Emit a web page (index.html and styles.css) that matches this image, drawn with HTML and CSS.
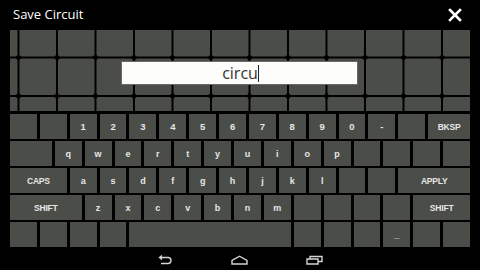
FILE: index.html
```html
<!DOCTYPE html>
<html>
<head>
<meta charset="utf-8">
<link rel="stylesheet" href="styles.css">
</head>
<body>
<div class="screen">
  <header class="topbar">
    <span class="title">Save Circuit</span>
    <svg class="close" width="14" height="14" viewBox="0 0 14 14"><path d="M2 2 L12 12 M12 2 L2 12" stroke="#fff" stroke-width="2.6" stroke-linecap="square"/></svg>
  </header>
  <main class="panel">
    <div class="canvas">
      <div class="field"><span class="val">circu</span><span class="cursor"></span></div>
    </div>
    <div class="keyboard">
      <div class="key"></div><div class="key"></div><div class="key num">1</div><div class="key num">2</div><div class="key num">3</div><div class="key num">4</div><div class="key num">5</div><div class="key num">6</div><div class="key num">7</div><div class="key num">8</div><div class="key num">9</div><div class="key num">0</div><div class="key num">-</div><div class="key"></div><div class="key k3 cap">BKSP</div>

      <div class="key k3"></div><div class="key">q</div><div class="key">w</div><div class="key">e</div><div class="key">r</div><div class="key">t</div><div class="key">y</div><div class="key">u</div><div class="key">i</div><div class="key">o</div><div class="key">p</div><div class="key"></div><div class="key"></div><div class="key"></div><div class="key"></div>

      <div class="key k4 cap">CAPS</div><div class="key">a</div><div class="key">s</div><div class="key">d</div><div class="key">f</div><div class="key">g</div><div class="key">h</div><div class="key">j</div><div class="key">k</div><div class="key">l</div><div class="key"></div><div class="key"></div><div class="key k5 cap">APPLY</div>

      <div class="key k5 cap">SHIFT</div><div class="key">z</div><div class="key">x</div><div class="key">c</div><div class="key">v</div><div class="key">b</div><div class="key">n</div><div class="key">m</div><div class="key"></div><div class="key"></div><div class="key"></div><div class="key"></div><div class="key k4 cap">SHIFT</div>

      <div class="key"></div><div class="key"></div><div class="key"></div><div class="key"></div><div class="key k11"></div><div class="key"></div><div class="key"></div><div class="key"></div><div class="key num">_</div><div class="key"></div><div class="key"></div>
    </div>
  </main>
  <nav class="navbar">
    <svg width="16" height="10" viewBox="0 0 16 10"><path d="M2.5 2.5 H11 A3 3 0 0 1 11 8.5 H4 M5 0.5 L2.5 2.5 L5 4.5" fill="none" stroke="#d4d4d4" stroke-width="1.4"/></svg>
    <svg width="17" height="10" viewBox="0 0 17 10"><path d="M1 9 V5.5 L8.5 1.2 L16 5.5 V9 Z" fill="none" stroke="#d4d4d4" stroke-width="1.4"/></svg>
    <svg width="17" height="10" viewBox="0 0 17 10"><path d="M1 4 H12 V9 H1 Z M4 4 V1.5 H16 V6.5 H12" fill="none" stroke="#d4d4d4" stroke-width="1.4"/></svg>
  </nav>
</div>
</body>
</html>
```

FILE: styles.css
```css
html, body {
  margin: 0;
  padding: 0;
  background: #000;
}
.screen {
  width: 480px;
  height: 270px;
  overflow: hidden;
  background: #000;
  display: flex;
  flex-direction: column;
  font-family: "Open Sans", "Liberation Sans", sans-serif;
}
.topbar {
  height: 30px;
  flex: none;
  display: flex;
  align-items: center;
  justify-content: space-between;
  padding: 0 18px 2px 13px;
  box-sizing: border-box;
}
.title {
  color: #fff;
  font-size: 13px;
  line-height: 17px;
}
.close {
  display: block;
  margin-top: 1px;
}
.panel {
  flex: none;
  padding: 0 10px;
  display: flex;
  flex-direction: column;
  gap: 3px;
}
.canvas {
  position: relative;
  height: 81px;
  background-color: #4b4d48;
  background-image:
    radial-gradient(circle, #000 2.2px, transparent 2.8px),
    linear-gradient(to right, #000 2px, transparent 2px),
    linear-gradient(to bottom, #000 2px, transparent 2px);
  background-size: 38.5px 38.5px;
  background-position: -10.75px 8.25px, 7.5px 0, 0 26.5px;
}
.field {
  position: absolute;
  left: 111px;
  top: 31px;
  width: 237px;
  height: 24px;
  box-sizing: border-box;
  border: 1px solid #6a6a66;
  background: #fdfdfb;
  display: flex;
  align-items: center;
  justify-content: center;
}
.val {
  font-family: "Open Sans", sans-serif;
  font-size: 16px;
  color: #333;
  line-height: 20px;
  margin-left: 2px;
}
.cursor {
  width: 1px;
  height: 17px;
  background: #222;
}
.keyboard {
  display: grid;
  grid-template-columns: repeat(31, 1fr);
  grid-auto-rows: 25px;
  column-gap: 3px;
  row-gap: 2px;
}
.key {
  grid-column: span 2;
  background: #4b4d48;
  color: #e6e6e6;
  font-family: "Liberation Sans", sans-serif;
  font-size: 9px;
  font-weight: bold;
  display: flex;
  align-items: center;
  justify-content: center;
}
.k3 { grid-column: span 3; }
.k4 { grid-column: span 4; }
.k5 { grid-column: span 5; }
.k11 { grid-column: span 11; }
.cap {
  font-size: 8.5px;
  letter-spacing: -0.2px;
}
.num {
  font-size: 9.5px;
}
.navbar {
  flex: none;
  height: 20px;
  margin-top: 3px;
  display: flex;
  align-items: center;
  justify-content: center;
  gap: 58px;
}
.navbar svg {
  display: block;
}
```
